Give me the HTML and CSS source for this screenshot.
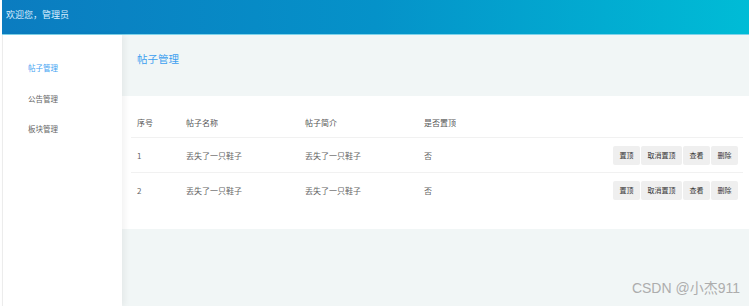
FILE: index.html
```html
<!DOCTYPE html>
<html lang="zh-CN">
<head>
    <meta charset="UTF-8">
    <meta name="viewport" content="width=device-width, initial-scale=1.0">
    <title>帖子管理</title>
    <link rel="stylesheet" href="styles.css">
</head>
<body>
    <div class="page">
        <!-- Top bar -->
        <div class="top-bar">欢迎您，管理员</div>

        <div class="layout">
            <!-- Side menu -->
            <div class="side-menu">
                <div class="menu-item active">帖子管理</div>
                <div class="menu-item">公告管理</div>
                <div class="menu-item">板块管理</div>
            </div>

            <!-- Main content -->
            <div class="main">
                <div class="page-title">帖子管理</div>

                <div class="card">
                    <table class="post-table">
                        <thead>
                            <tr>
                                <th class="col-id">序号</th>
                                <th class="col-name">帖子名称</th>
                                <th class="col-desc">帖子简介</th>
                                <th class="col-top">是否置顶</th>
                                <th></th>
                            </tr>
                        </thead>
                        <tbody>
                            <tr>
                                <td>1</td>
                                <td>丢失了一只鞋子</td>
                                <td>丢失了一只鞋子</td>
                                <td>否</td>
                                <td class="actions">
                                    <button>置顶</button><button>取消置顶</button><button>查看</button><button>删除</button>
                                </td>
                            </tr>
                            <tr>
                                <td>2</td>
                                <td>丢失了一只鞋子</td>
                                <td>丢失了一只鞋子</td>
                                <td>否</td>
                                <td class="actions">
                                    <button>置顶</button><button>取消置顶</button><button>查看</button><button>删除</button>
                                </td>
                            </tr>
                        </tbody>
                    </table>
                </div>
            </div>
        </div>

        <div class="watermark">CSDN @小杰911</div>
    </div>
</body>
</html>
```

FILE: styles.css
```css
body {
    margin: 0;
    padding: 0;
    background-color: #fff;
    font-family: "Noto Sans CJK SC", "Noto Sans", sans-serif;
}
.page {
    position: relative;
    width: 747px;
    height: 306px;
    margin-left: 2px;
    display: flex;
    flex-direction: column;
}
.top-bar {
    height: 35px;
    line-height: 29px;
    padding-left: 4px;
    font-size: 9px;
    color: #dcefff;
    background: linear-gradient(to right, #0b7cc0, #0592c9 50%, #00bcd6);
    border-bottom: 1px solid #7fd3ea;
    box-sizing: border-box;
}
.layout {
    flex: 1;
    display: flex;
}
.side-menu {
    position: relative;
    z-index: 1;
    width: 119px;
    padding-top: 18px;
    background-color: #fff;
    border-left: 1px solid #ececec;
    box-shadow: 3px 0 6px rgba(0, 0, 0, 0.05);
}
.menu-item {
    height: 30.5px;
    line-height: 30px;
    padding-left: 25px;
    font-size: 7.5px;
    color: #666;
}
.menu-item.active {
    color: #3fa3f2;
}
.main {
    flex: 1;
    background-color: #f1f6f6;
}
.page-title {
    height: 61px;
    box-sizing: border-box;
    padding: 16px 0 0 15px;
    line-height: 16px;
    font-size: 10.5px;
    color: #3d9ff0;
}
.card {
    background-color: #fff;
    padding: 11px 6px 22px 9px;
}
.post-table {
    width: 100%;
    border-collapse: collapse;
    font-size: 8px;
    color: #666;
}
.post-table th {
    height: 30px;
    padding: 0 0 0 6px;
    text-align: left;
    font-weight: normal;
    color: #555;
}
.post-table td {
    height: 34px;
    padding: 0 0 0 6px;
    border-top: 1px solid #f1f1f1;
}
.col-id {
    width: 43px;
}
.col-name,
.col-desc {
    width: 113px;
}
.col-top {
    width: 80px;
}
.post-table td.actions {
    text-align: right;
    padding-right: 5px;
}
.actions button {
    height: 19px;
    margin-left: 1px;
    padding: 0 6.5px;
    font-family: inherit;
    font-size: 7px;
    color: #333;
    border: none;
    border-radius: 2px;
    background-color: #efefef;
    vertical-align: middle;
}
.watermark {
    position: absolute;
    right: 9px;
    bottom: 9px;
    font-family: "Liberation Sans", "Noto Sans CJK SC", sans-serif;
    font-size: 14px;
    color: #adadad;
}
```
